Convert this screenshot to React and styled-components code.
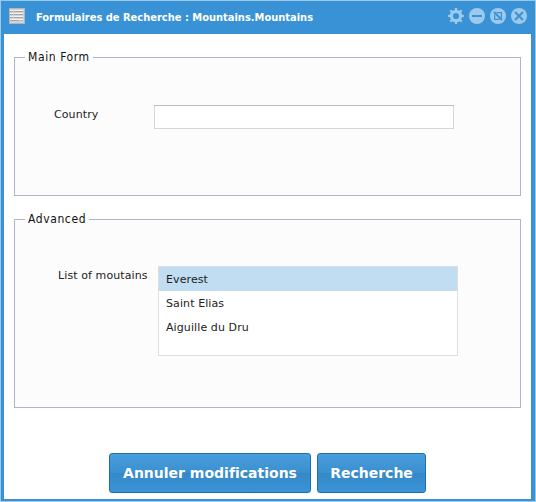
import React, { useState } from 'react';
import styled, { createGlobalStyle } from 'styled-components';

const GlobalStyle = createGlobalStyle`
  *, *::before, *::after { box-sizing: border-box; }
  body { margin: 0; background: #fff; }
`;

const Window = styled.div`
  display: flex;
  flex-direction: column;
  width: 536px;
  height: 502px;
  border: 1px solid #9bcbec;
  background: #fff;
  font: 11px/14px "DejaVu Sans", Verdana, sans-serif;
  font-variant-ligatures: none;
  color: #222;
`;

const TitleBar = styled.header`
  display: flex;
  align-items: center;
  flex: none;
  height: 33px;
  padding: 0 8px 3px 8px;
  background: #3a92d6;
`;

const Title = styled.h1`
  flex: 1;
  margin: 3px 0 0 10px;
  color: #fff;
  font: bold 11px/14px "DejaVu Sans Condensed", Tahoma, sans-serif;
  white-space: nowrap;
`;

const WindowActions = styled.div`
  display: flex;
  gap: 5px;
`;

const ActionButton = styled.button`
  width: 16px;
  height: 16px;
  padding: 0;
  border: 0;
  background: none;
  svg { display: block; }
`;

const Content = styled.main`
  display: flex;
  flex-direction: column;
  flex: 1;
  min-height: 0;
  padding: 15px 10px 0;
  border: solid #3a92d6;
  border-width: 0 4px 2px 3px;
`;

const Group = styled.fieldset`
  flex: none;
  width: 507px;
  height: ${(p) => p.$height}px;
  min-width: 0;
  margin: 0 0 15px;
  padding: 0;
  border: 1px solid #b2b3c9;
  background: #fcfcfc;
`;

const Legend = styled.legend`
  height: 16px;
  margin-left: 10px;
  padding: 0 3px;
  color: #111;
  font: 12px/16px "DejaVu Sans Condensed", Tahoma, sans-serif;
  letter-spacing: 0.6px;
`;

const Field = styled.div`
  display: flex;
  align-items: flex-start;
  padding: ${(p) => p.$inset};
`;

const Label = styled.label`
  width: 100px;
  padding-top: 3px;
  letter-spacing: 0.1px;
  white-space: nowrap;
`;

const TextInput = styled.input`
  width: 300px;
  height: 24px;
  padding: 0 6px;
  border: 1px solid #d6d6d6;
  border-top-color: #bdbdbd;
  border-radius: 0;
  outline: 0;
  background: #fff;
  font: inherit;
`;

const List = styled.ul`
  width: 300px;
  height: 90px;
  margin: 0;
  padding: 0;
  border: 1px solid #dedede;
  background: #fff;
  list-style: none;
`;

const ListItem = styled.li`
  height: 24px;
  padding: 1px 0 0 7px;
  background: ${(p) => (p.$selected ? '#c0ddf1' : 'transparent')};
  letter-spacing: 0.1px;
  line-height: 24px;
`;

const Footer = styled.footer`
  display: flex;
  justify-content: center;
  gap: 6px;
  margin-top: 30px;
`;

const Button = styled.button`
  width: ${(p) => p.$width}px;
  height: 40px;
  padding: 0;
  border: 1px solid #1a70b2;
  border-radius: 3px;
  background: linear-gradient(#4a9edc 0%, #3a8fd0 49%, #3488c7 50%, #3a94d7 100%);
  color: #fff;
  font: bold 14px/18px "DejaVu Sans", Verdana, sans-serif;
  font-variant-ligatures: none;
  white-space: nowrap;
`;

const FormIcon = () => (
  <svg width="17" height="17" viewBox="0 0 17 17" shapeRendering="crispEdges" aria-hidden="true">
    <path fill="#b4b6b7" d="M0 0h16v16H0z" />
    <path fill="#d2d3d4" d="M1 1h14v14H1z" />
    <path fill="#a2a4a5" d="M1 3h3v1H1zM1 6h3v1H1zM1 9h3v1H1zM5 3h9v1H5zM5 6h9v1H5zM5 9h9v1H5zM1 12h9v1H1z" />
    <path fill="#f4f4f4" d="M1 2h3v1H1zM1 5h3v1H1zM1 8h3v1H1zM5 2h9v1H5zM5 5h9v1H5zM5 8h9v1H5zM1 11h13v1H1z" />
    <path fill="#a3bddd" d="M11 12h3v1h-3z" />
  </svg>
);

const GearIcon = () => (
  <svg width="16" height="16" viewBox="0 0 16 16" aria-hidden="true">
    <circle cx="8" cy="8" r="4.7" fill="none" stroke="#9dcaec" strokeWidth="3.2" />
    <path
      stroke="#9dcaec"
      strokeWidth="2.2"
      d="M8 0v3M8 13v3M0 8h3M13 8h3M2.3 2.3l2 2M11.7 11.7l2 2M2.3 13.7l2-2M11.7 4.3l2-2"
    />
  </svg>
);

const DiscIcon = ({ children }) => (
  <svg width="16" height="16" viewBox="0 0 16 16" fill="none" stroke="#3a92d6" strokeWidth="2" aria-hidden="true">
    <circle cx="8" cy="8" r="8" fill="#9dcaec" stroke="none" />
    {children}
  </svg>
);

const mountains = ['Everest', 'Saint Elias', 'Aiguille du Dru'];

export default function App() {
  const [selected, setSelected] = useState('Everest');
  return (
    <>
      <GlobalStyle />
      <Window>
        <TitleBar>
          <FormIcon />
          <Title>Formulaires de Recherche : Mountains.Mountains</Title>
          <WindowActions>
            <ActionButton aria-label="Settings"><GearIcon /></ActionButton>
            <ActionButton aria-label="Minimize"><DiscIcon><path d="M3 8h10" /></DiscIcon></ActionButton>
            <ActionButton aria-label="Maximize">
              <DiscIcon>
                <path d="M4 4l8 8" />
                <path d="M6.5 4.6H11.4V10M4.6 6.5v4.9H9.5" strokeWidth="1.2" />
              </DiscIcon>
            </ActionButton>
            <ActionButton aria-label="Close"><DiscIcon><path d="M4 4l8 8M12 4l-8 8" /></DiscIcon></ActionButton>
          </WindowActions>
        </TitleBar>
        <Content>
          <Group $height={147}>
            <Legend>Main Form</Legend>
            <Field $inset="40px 0 0 39px">
              <Label htmlFor="country">Country</Label>
              <TextInput id="country" />
            </Field>
          </Group>
          <Group $height={197}>
            <Legend>Advanced</Legend>
            <Field $inset="39px 0 0 43px">
              <Label>List of moutains</Label>
              <List>
                {mountains.map((name) => (
                  <ListItem key={name} $selected={name === selected} onClick={() => setSelected(name)}>
                    {name}
                  </ListItem>
                ))}
              </List>
            </Field>
          </Group>
          <Footer>
            <Button $width={202}>Annuler modifications</Button>
            <Button $width={109}>Recherche</Button>
          </Footer>
        </Content>
      </Window>
    </>
  );
}
